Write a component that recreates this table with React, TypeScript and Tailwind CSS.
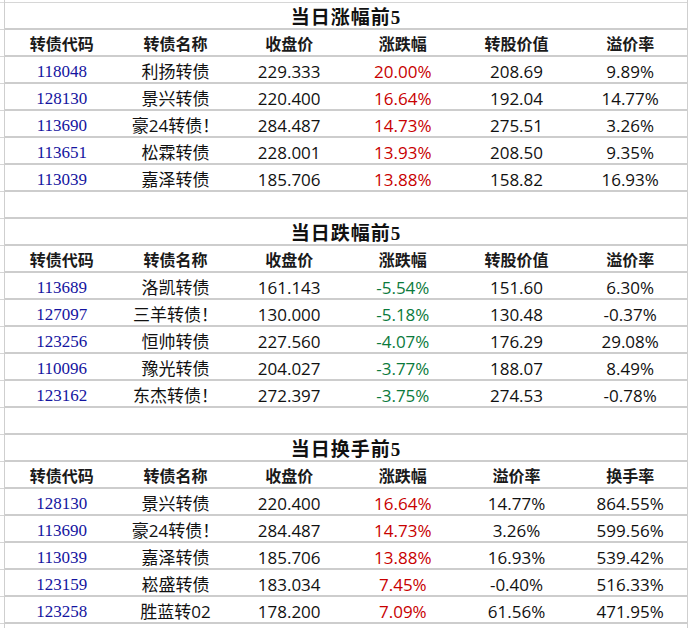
type Cell = { v: string; tone?: "up" | "down" | "plain" };

type Section = {
  title: string;
  heads: string[];
  rows: string[][];
  signCol: number;
};

const sections: Section[] = [
  {
    title: "当日涨幅前5",
    heads: ["转债代码", "转债名称", "收盘价", "涨跌幅", "转股价值", "溢价率"],
    signCol: 3,
    rows: [
      ["118048", "利扬转债", "229.333", "20.00%", "208.69", "9.89%"],
      ["128130", "景兴转债", "220.400", "16.64%", "192.04", "14.77%"],
      ["113690", "豪24转债！", "284.487", "14.73%", "275.51", "3.26%"],
      ["113651", "松霖转债", "228.001", "13.93%", "208.50", "9.35%"],
      ["113039", "嘉泽转债", "185.706", "13.88%", "158.82", "16.93%"],
    ],
  },
  {
    title: "当日跌幅前5",
    heads: ["转债代码", "转债名称", "收盘价", "涨跌幅", "转股价值", "溢价率"],
    signCol: 3,
    rows: [
      ["113689", "洛凯转债", "161.143", "-5.54%", "151.60", "6.30%"],
      ["127097", "三羊转债！", "130.000", "-5.18%", "130.48", "-0.37%"],
      ["123256", "恒帅转债", "227.560", "-4.07%", "176.29", "29.08%"],
      ["110096", "豫光转债", "204.027", "-3.77%", "188.07", "8.49%"],
      ["123162", "东杰转债！", "272.397", "-3.75%", "274.53", "-0.78%"],
    ],
  },
  {
    title: "当日换手前5",
    heads: ["转债代码", "转债名称", "收盘价", "涨跌幅", "溢价率", "换手率"],
    signCol: 3,
    rows: [
      ["128130", "景兴转债", "220.400", "16.64%", "14.77%", "864.55%"],
      ["113690", "豪24转债！", "284.487", "14.73%", "3.26%", "599.56%"],
      ["113039", "嘉泽转债", "185.706", "13.88%", "16.93%", "539.42%"],
      ["123159", "崧盛转债", "183.034", "7.45%", "-0.40%", "516.33%"],
      ["123258", "胜蓝转02", "178.200", "7.09%", "61.56%", "471.95%"],
    ],
  },
];

const row = "h-[27px] box-border border-b-2 border-[#cdcdcd]";
const sans = "font-['Open_Sans','Noto_Sans_CJK_SC',sans-serif]";

const DataCell = ({ cell, col }: { cell: Cell; col: number }) => {
  if (col === 0) {
    return (
      <div className="flex items-center justify-center pt-[2px] font-['Liberation_Serif','Noto_Sans_CJK_SC',serif] text-[17px] text-[#1414a0]">
        {cell.v}
      </div>
    );
  }
  const color =
    cell.tone === "up" ? "text-[#c80000]" : cell.tone === "down" ? "text-[#0b7a3c]" : "text-[#111]";
  return (
    <div className={`flex items-center justify-center pt-[2px] text-[17px] ${sans} ${color}`}>{cell.v}</div>
  );
};

const Block = ({ s, last }: { s: Section; last: boolean }) => (
  <>
    <div className={`${row} flex items-end justify-center pb-[1px]`}>
      <span className="font-['Liberation_Serif','Noto_Sans_CJK_SC',serif] text-[19px] font-bold leading-none tracking-[1px] text-[#111]">
        {s.title}
      </span>
    </div>
    <div className={`${row} grid grid-cols-6`}>
      {s.heads.map((h) => (
        <div
          key={h}
          className="flex items-center justify-center pt-[1px] font-['Noto_Sans_CJK_SC',sans-serif] text-[16px] font-bold text-[#1a1a1a]"
        >
          {h}
        </div>
      ))}
    </div>
    {s.rows.map((r) => (
      <div key={r[0]} className={`${row} grid grid-cols-6`}>
        {r.map((v, i) => {
          const tone: Cell["tone"] = i === s.signCol ? (v.startsWith("-") ? "down" : "up") : "plain";
          return <DataCell key={i} cell={{ v, tone }} col={i} />;
        })}
      </div>
    ))}
    {!last && <div className={row} />}
  </>
);

export default function App() {
  const stripRows = Array.from({ length: 24 });
  return (
    <div className="flex h-[628px] w-[691px] overflow-hidden bg-white">
      <div className="w-[5px] shrink-0 border-r border-[#cfcfcf] pt-[2px]">
        <div className="border-t border-[#dcdcdc]" />
        {stripRows.map((_, i) => (
          <div key={i} className="h-[27px] box-border border-b border-[#d6d6d6]" />
        ))}
      </div>
      <div className="w-[683px] shrink-0 border-r border-[#cfcfcf] pt-[2px]">
        <div className="border-t border-[#d6d6d6]" />
        {sections.map((s, i) => (
          <Block key={s.title} s={s} last={i === sections.length - 1} />
        ))}
      </div>
      <div className="flex-1" />
    </div>
  );
}
